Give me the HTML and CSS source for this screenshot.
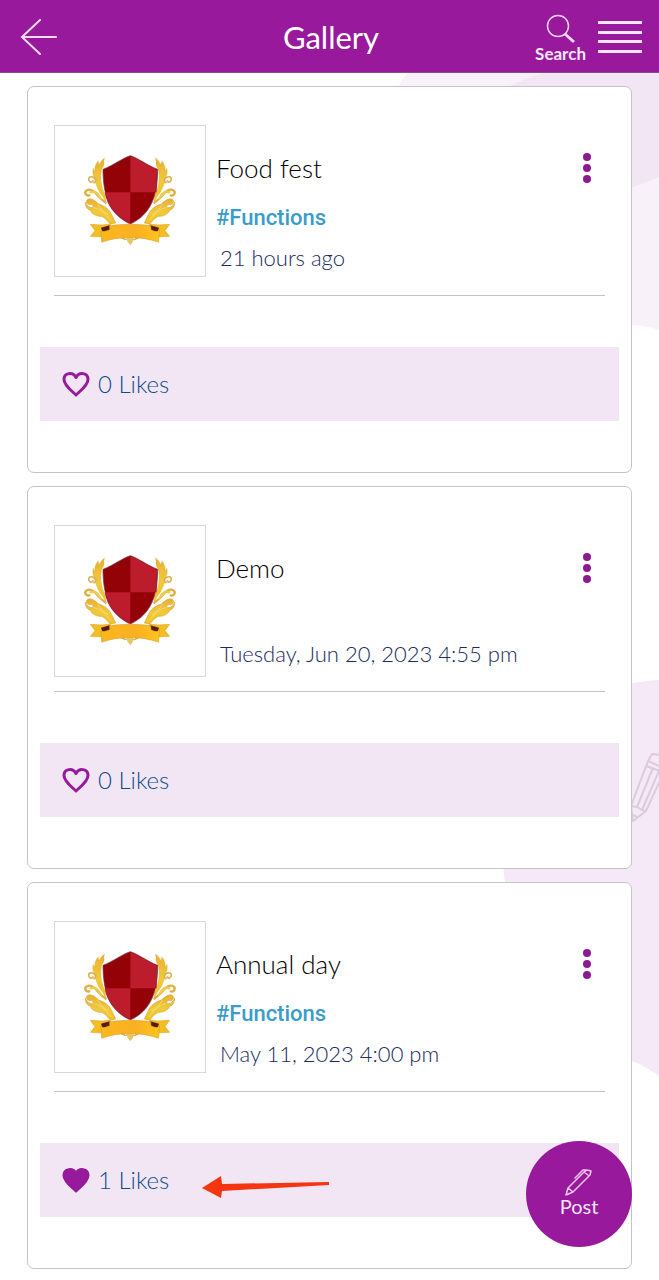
FILE: index.html
```html
<!DOCTYPE html>
<html lang="en">
<head>
<meta charset="utf-8">
<meta name="viewport" content="width=device-width, initial-scale=1">
<title>Gallery</title>
<link rel="stylesheet" href="styles.css">
</head>
<body>
<svg class="defs" width="0" height="0" aria-hidden="true">
  <defs>
    <linearGradient id="gold" x1="0" y1="0" x2="0" y2="1">
      <stop offset="0" stop-color="#e9b030"/>
      <stop offset=".55" stop-color="#f0c93c"/>
      <stop offset="1" stop-color="#f2c11c"/>
    </linearGradient>
    <linearGradient id="band" x1="0" y1="0" x2="1" y2="0">
      <stop offset="0" stop-color="#fbb81d"/>
      <stop offset=".6" stop-color="#f9b022"/>
      <stop offset="1" stop-color="#fdc51a"/>
    </linearGradient>
    <g id="wing">
      <path d="M104 54C97 58 92 65 88 73C85 69 84 66 85 62C77 71 73 82 75 92C71 90 70 87 70 84C66 97 69 108 76 117C74 121 75 126 78 132C82 145 89 158 98 169L107 187C109 174 104 162 99 150C92 130 91 110 94 93C96 83 104 78 102 69C101 64 102 59 104 54Z" fill="url(#gold)" stroke="#d9a739" stroke-width="1"/>
      <path d="M77 119C70 107 56 108 56 118C56 126 65 129 69 123M72 128C78 126 78 120 75 116" fill="none" stroke="#ddb04a" stroke-width="5" stroke-linecap="round"/>
      <path d="M58 166C48 169 42 158 49 152C60 144 75 154 82 165C88 175 98 180 107 188" fill="none" stroke="#dfb044" stroke-width="7" stroke-linecap="round"/>
      <path d="M62 157C76 151 86 163 92 176" fill="none" stroke="#efcb4c" stroke-width="7" stroke-linecap="round"/>
      <path d="M66 192C54 199 45 185 52 179C62 171 77 184 86 192C103 197 119 209 125 224L137 249L121 252C114 244 106 235 96 229C80 230 65 222 61 211C50 207 46 198 46 186C54 203 63 204 71 202C69 199 68 196 66 192Z" fill="url(#gold)" stroke="#d7a63a" stroke-width="2"/>
      <path d="M70 203C87 204 106 219 123 243M83 193C88 205 101 214 114 225" fill="none" stroke="#f8e68a" stroke-width="2"/>
      <path d="M158 290C160 301 172 301 173 293M151 289C154 296 161 297 166 291" fill="none" stroke="#d8b04a" stroke-width="4"/>
      <path d="M61 253L96 255L121 252L123 269L101 291L61 289L75 272Z" fill="#f4bd20" stroke="#d59a24" stroke-width="1.5"/>
      <path d="M93 263L119 256L120 269L97 275Z" fill="#5b1c08"/>
    </g>
    <symbol id="emblem" viewBox="-45 -42 450 450">
      <use href="#wing"/>
      <use href="#wing" transform="translate(360 0) scale(-1 1)"/>
      <path d="M180 289C172 292 169 303 174 307L181 316L188 307C194 300 187 291 180 289Z" fill="#e6c767"/>
      <path d="M181 47C158 54 132 75 99 88C99 163 117 223 181 252C245 223 263 163 263 88C230 75 204 54 181 47Z" fill="#930207"/>
      <path d="M181 49C204 56 230 76 261 89L260 157H181Z" fill="#bd1c2c"/>
      <path d="M104 157H181V250C131 226 112 198 104 157Z" fill="#bd1c2c"/>
      <path d="M181 47C158 54 132 75 99 88C99 163 117 223 181 252C245 223 263 163 263 88C230 75 204 54 181 47Z" fill="none" stroke="#773044" stroke-width="2"/>
      <path d="M93 269C96 276 106 277 119 269L119 257C157 251 204 251 242 257L243 269C255 277 266 276 268 268L266 307C215 288 144 288 95 307Z" fill="url(#band)" stroke="#cf962b" stroke-width="1.5"/>
    </symbol>
    <symbol id="heart" viewBox="0 0 28 26">
      <path d="M14 24C10 20 2 14.500 2 8.500C2 1.500 11 .500 14 6.500C17 .500 26 1.500 26 8.500C26 14.500 18 20 14 24Z" stroke="#961a9c" stroke-width="3" stroke-linejoin="round"/>
    </symbol>
    <symbol id="dots" viewBox="0 0 10 32">
      <circle cx="5" cy="5" r="4"/><circle cx="5" cy="16" r="4"/><circle cx="5" cy="27" r="4"/>
    </symbol>
  </defs>
</svg>

<svg class="backdrop" width="260" height="1280" viewBox="0 0 260 1280" aria-hidden="true">
  <path d="M0 86C8 68 35 50 60 50H260V330C250 326 236 325 226 325C100 320 20 180 0 86Z" fill="#f8f1f9"/>
  <path d="M106 88C130 78 160 60 260 60V177L232 188C190 200 130 150 106 88Z" fill="#f2e6f4"/>
  <path d="M260 680C235 681 218 687 200 695C130 730 95 810 106 882C120 980 170 1040 232 1061C245 1065 252 1071 260 1076Z" fill="#f5e9f7"/>
  <g fill="none" stroke="#dccbdd" stroke-width="2" stroke-linejoin="round">
    <path d="M264 755L253 754L249 761L232 806L234 821L247 811L264 774M249 761L264 768M247 766L264 772M238 807L254 768M243 810L260 771M232 806L238 807L243 810L247 811M234 815L238 817"/>
  </g>
</svg>

<header class="topbar">
  <button class="icon-button back" type="button" aria-label="Back">
    <svg width="38" height="36" viewBox="0 0 38 36" fill="none" stroke="#f6dcf7" stroke-width="2" stroke-linecap="round"><path d="M36 18H2M20 1L2 18L20 35"/></svg>
  </button>
  <h1 class="topbar-title">Gallery</h1>
  <div class="topbar-actions">
    <button class="icon-button search" type="button">
      <svg width="30" height="30" viewBox="0 0 30 30" fill="none" stroke="#f6d5f7"><circle cx="12" cy="12" r="10.500" stroke-width="1.500"/><path d="M19 20L28 28" stroke-width="3"/></svg>
      <span>Search</span>
    </button>
    <button class="icon-button menu" type="button" aria-label="Menu">
      <svg width="44" height="34" viewBox="0 0 44 34" fill="#fae6fb"><path d="M0 1h44v3H0zM0 11h44v3H0zM0 20h44v3H0zM0 30h44v3H0z"/></svg>
    </button>
  </div>
</header>

<main class="feed">
  <article class="card">
    <div class="card-body">
      <svg class="thumb" role="img" aria-label="School emblem"><use href="#emblem"/></svg>
      <div class="details">
        <h2 class="title">Food fest</h2>
        <div class="tag-row"><a class="tag" href="#functions">#Functions</a></div>
        <time class="date">21 hours ago</time>
      </div>
      <button class="icon-button more" type="button" aria-label="More options"><svg width="10" height="32"><use href="#dots"/></svg></button>
    </div>
    <div class="likes">
      <button class="like" type="button"><svg class="heart" width="28" height="26"><use href="#heart"/></svg><span>0 Likes</span></button>
    </div>
  </article>

  <article class="card">
    <div class="card-body">
      <svg class="thumb" role="img" aria-label="School emblem"><use href="#emblem"/></svg>
      <div class="details">
        <h2 class="title">Demo</h2>
        <div class="tag-row"></div>
        <time class="date">Tuesday, Jun 20, 2023 4:55 pm</time>
      </div>
      <button class="icon-button more" type="button" aria-label="More options"><svg width="10" height="32"><use href="#dots"/></svg></button>
    </div>
    <div class="likes">
      <button class="like" type="button"><svg class="heart" width="28" height="26"><use href="#heart"/></svg><span>0 Likes</span></button>
    </div>
  </article>

  <article class="card">
    <div class="card-body">
      <svg class="thumb" role="img" aria-label="School emblem"><use href="#emblem"/></svg>
      <div class="details">
        <h2 class="title">Annual day</h2>
        <div class="tag-row"><a class="tag" href="#functions">#Functions</a></div>
        <time class="date">May 11, 2023 4:00 pm</time>
      </div>
      <button class="icon-button more" type="button" aria-label="More options"><svg width="10" height="32"><use href="#dots"/></svg></button>
    </div>
    <div class="likes">
      <button class="like" type="button"><svg class="heart liked" width="28" height="26"><use href="#heart"/></svg><span>1 Likes</span></button>
      <svg class="pointer" width="128" height="24" viewBox="0 0 128 24" aria-hidden="true"><path d="M0 13L19 1L20 9L127 7V10L20 16L19 23Z" fill="#f53410"/></svg>
    </div>
  </article>
</main>

<button class="post" type="button">
  <svg width="28" height="28" viewBox="0 0 28 28" fill="none" stroke="#f3c9f4" stroke-width="1.500" stroke-linejoin="round" stroke-linecap="round"><path d="M1 27L3 20L19 4L22 2L26 3L25 7L8 24ZM3 20L8 24M10 10L18 2L21 2M19 4L23 7"/></svg>
  <span>Post</span>
</button>
</body>
</html>
```
FILE: styles.css
```css
* {
  box-sizing: border-box;
}

body {
  position: relative;
  margin: 0;
  background: #fff;
  font-family: Lato, "Open Sans", sans-serif;
  color: #000;
}

button {
  margin: 0;
  padding: 0;
  border: 0;
  background: none;
  font: inherit;
  cursor: pointer;
}

svg {
  display: block;
}

.defs {
  position: absolute;
}

.backdrop {
  position: absolute;
  top: 0;
  right: 0;
  z-index: -1;
}

.topbar {
  display: grid;
  grid-template-columns: 1fr auto 1fr;
  align-items: center;
  height: 73px;
  padding: 2px 17px 0 20px;
  background: #98199c;
  border-bottom: 1px solid #8a4a8f;
  color: #fff;
}

.back {
  justify-self: start;
}

.topbar-title {
  margin: 0;
  font-size: 31px;
  line-height: 40px;
  font-weight: 400;
}

.topbar-actions {
  display: flex;
  justify-content: flex-end;
  align-items: center;
  gap: 12px;
}

.search {
  display: flex;
  flex-direction: column;
  align-items: center;
  padding-top: 4px;
  color: #fae6fb;
  font-size: 17px;
  line-height: 20px;
  font-weight: 700;
}

.feed {
  display: grid;
  gap: 13px;
  padding: 13px 27px 11px;
}

.card {
  padding: 38px 12px 51px;
  background: #fff;
  border: 1px solid #c4c4c8;
  border-radius: 7px;
}

.card-body {
  display: flex;
  align-items: flex-start;
  margin: 0 14px 51px;
  border-bottom: 1px solid #c4c4c6;
}

.thumb {
  flex: none;
  width: 152px;
  height: 152px;
  border: 1px solid #d8d8da;
}

.details {
  flex: 1;
  padding: 27px 0 23px 10px;
}

.title {
  margin: 0 0 20px;
  font-size: 26px;
  line-height: 32px;
  font-weight: 300;
}

.tag-row {
  min-height: 24px;
  margin-bottom: 12px;
}

.tag {
  display: block;
  color: #3a9ccb;
  font-family: Roboto, sans-serif;
  font-size: 22px;
  line-height: 28px;
  font-weight: 500;
  text-decoration: none;
}

.date {
  display: block;
  padding-left: 4px;
  color: #202b5c;
  font-size: 22px;
  line-height: 28px;
  font-weight: 300;
}

.more {
  margin: 27px 13px 0 0;
  fill: #8d1a92;
}

.likes {
  display: flex;
  align-items: center;
  gap: 33px;
  height: 74px;
  padding: 0 22px;
  background: #f2e6f4;
}

.like {
  display: flex;
  align-items: center;
  gap: 8px;
  color: #0f4c8c;
  font-size: 24px;
  line-height: 32px;
  font-weight: 300;
}

.heart {
  fill: none;
}

.heart.liked {
  fill: #961a9c;
}

.pointer {
  margin-top: 14px;
}

.post {
  position: fixed;
  right: 27px;
  bottom: 33px;
  display: flex;
  flex-direction: column;
  align-items: center;
  justify-content: center;
  width: 106px;
  height: 106px;
  padding-bottom: 4px;
  border-radius: 50%;
  background: #98199c;
  color: #fae6fb;
  font-size: 20px;
  line-height: 20px;
}
```
